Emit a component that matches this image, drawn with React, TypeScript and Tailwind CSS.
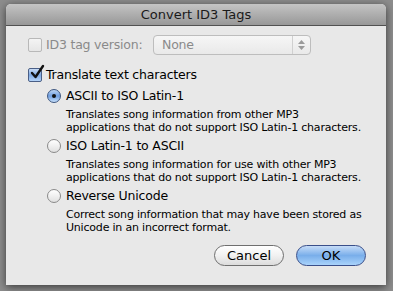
import React from 'react';

const font = { fontFamily: '"Lucida Grande", "DejaVu Sans", sans-serif' };

const Checkbox: React.FC<{ checked?: boolean; disabled?: boolean }> = ({ checked, disabled }) => (
    <div className="relative w-[14px] h-[14px] shrink-0">
        <div
            className={
                'w-[14px] h-[14px] rounded-[2px] border ' +
                (disabled
                    ? 'border-[#b8b8b8] bg-gradient-to-b from-[#f4f4f4] to-[#e6e6e6]'
                    : checked
                    ? 'border-[#4a5f86] bg-gradient-to-b from-[#c9dcf5] via-[#7fa9e3] to-[#b5d4f8]'
                    : 'border-[#8c8c8c] bg-gradient-to-b from-white to-[#e2e2e2]')
            }
        />
        {checked && (
            <svg className="absolute left-[1px] -top-[4px]" width="16" height="16" viewBox="0 0 16 16">
                <path d="M3 9 L6.5 13 L14 2" fill="none" stroke="#111" strokeWidth="2.4" strokeLinecap="round" strokeLinejoin="round" />
            </svg>
        )}
    </div>
);

const Radio: React.FC<{ checked?: boolean }> = ({ checked }) => (
    <div
        className={
            'w-[14px] h-[14px] rounded-full border shrink-0 flex items-center justify-center ' +
            (checked
                ? 'border-[#3e5780] bg-gradient-to-b from-[#bcd4f3] via-[#6f9edf] to-[#c7e0fb]'
                : 'border-[#8a8a8a] bg-gradient-to-b from-white to-[#e0e0e0]')
        }
    >
        {checked && <div className="w-[4px] h-[4px] rounded-full bg-[#111]" />}
    </div>
);

const Option: React.FC<{ label: string; checked?: boolean; lines: string[] }> = ({ label, checked, lines }) => (
    <div className="flex flex-col">
        <div className="flex items-center gap-[5px] h-[16px]">
            <Radio checked={checked} />
            <span className="text-[12.5px] tracking-[-0.2px] text-black leading-none">{label}</span>
        </div>
        <div className="pl-[19px] pt-[4px] text-[11px] tracking-[-0.2px] leading-[13px] text-black">
            {lines.map((l) => (
                <div key={l}>{l}</div>
            ))}
        </div>
    </div>
);

export default function App() {
    return (
        <div className="w-[393px] h-[291px] bg-[#8d8d8d] pl-[6px] pt-[4px] overflow-hidden" style={font}>
            <div className="w-[380px] h-[281px] bg-[#e8e8e8] rounded-t-[5px] shadow-[0_2px_8px_rgba(0,0,0,0.6)] flex flex-col">
                <div className="h-[22px] rounded-t-[5px] bg-gradient-to-b from-[#c4c4c4] to-[#989898] border-b border-[#515151] flex items-center justify-center">
                    <span className="text-[13px] text-[#1a1a1a]">Convert ID3 Tags</span>
                </div>

                <div className="flex flex-col pl-[22px] pt-[9px]">
                    <div className="flex items-center h-[20px]">
                        <Checkbox disabled />
                        <span className="ml-[4px] w-[107px] text-[12.5px] tracking-[-0.2px] text-[#8a8a8a]">ID3 tag version:</span>
                        <div className="w-[158px] h-[20px] rounded-[4px] border border-[#bdbdbd] bg-gradient-to-b from-[#f6f6f6] to-[#e9e9e9] flex items-center">
                            <span className="flex-1 pl-[8px] text-[12.5px] tracking-[-0.2px] text-[#8a8a8a]">None</span>
                            <div className="w-[18px] h-full border-l border-[#d0d0d0] flex flex-col items-center justify-center gap-[2px]">
                                <svg width="7" height="4" viewBox="0 0 7 4"><path d="M0 4 L3.5 0 L7 4Z" fill="#9a9a9a" /></svg>
                                <svg width="7" height="4" viewBox="0 0 7 4"><path d="M0 0 L3.5 4 L7 0Z" fill="#9a9a9a" /></svg>
                            </div>
                        </div>
                    </div>

                    <div className="flex items-center h-[16px] mt-[12px]">
                        <Checkbox checked />
                        <span className="ml-[4px] text-[12.5px] tracking-[-0.2px] text-black">Translate text characters</span>
                    </div>

                    <div className="flex flex-col gap-[4px] pl-[19px] mt-[5px]">
                        <Option
                            checked
                            label="ASCII to ISO Latin-1"
                            lines={['Translates song information from other MP3', 'applications that do not support ISO Latin-1 characters.']}
                        />
                        <Option
                            label="ISO Latin-1 to ASCII"
                            lines={['Translates song information for use with other MP3', 'applications that do not support ISO Latin-1 characters.']}
                        />
                        <Option
                            label="Reverse Unicode"
                            lines={['Correct song information that may have been stored as', 'Unicode in an incorrect format.']}
                        />
                    </div>
                </div>

                <div className="flex justify-end gap-[12px] pr-[20px] mt-auto mb-[19px]">
                    <button className="w-[70px] h-[21px] rounded-full border border-[#6f6f6f] bg-gradient-to-b from-white via-[#f1f1f1] to-[#dcdcdc] text-[13px] text-black">
                        Cancel
                    </button>
                    <button className="w-[70px] h-[21px] rounded-full border border-[#3a4f8a] bg-gradient-to-b from-[#c6dcf7] via-[#79aeea] to-[#a9d3fb] text-[13px] text-black">
                        OK
                    </button>
                </div>
            </div>
        </div>
    );
}
